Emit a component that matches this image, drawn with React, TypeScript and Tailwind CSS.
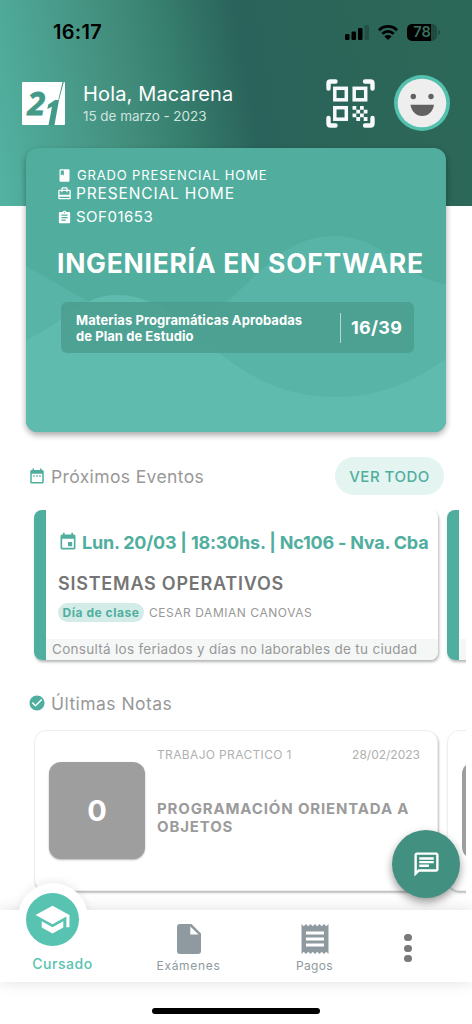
import {
  MdAssignment,
  MdCardTravel,
  MdCheckCircle,
  MdClass,
  MdDateRange,
  MdEvent,
  MdOutlineChat,
  MdReceipt,
  MdSchool,
} from "react-icons/md";

function Logo() {
  return (
    <svg width="43" height="43" viewBox="0 0 43 43" className="shrink-0">
      <rect width="43" height="43" rx="1" fill="#fff" />
      <text x="5.500" y="33" fontFamily="Open Sans, sans-serif" fontSize="32" fontWeight="700" fontStyle="italic" fill="#439a88" stroke="#439a88" strokeWidth="0.800">2</text>
      <path d="M40.500 0H41.800L37 18L32.500 43H26.500L30 24.800L25.300 27L26.300 22.500L33 18H36.300Z" fill="#439a88" />
    </svg>
  );
}

function StatusBar() {
  return (
    <div className="flex h-8 items-center justify-between pl-[53px] pr-[35px] text-black">
      <span className="text-[20px] font-semibold leading-none tracking-[0.3px]">16:17</span>
      <div className="flex items-center">
        <svg width="24" height="16" viewBox="0 0 24 16">
          <rect x="0" y="10" width="4.5" height="6" rx="1.2" />
          <rect x="6.5" y="7.5" width="4.5" height="8.5" rx="1.2" />
          <rect x="13" y="4" width="4.5" height="12" rx="1.2" />
          <rect x="19.5" y="1" width="4.5" height="15" rx="1.2" opacity="0.2" />
        </svg>
        <svg width="20" height="15" viewBox="0 0 20 15" className="ml-[9px]" fill="none" stroke="#000" strokeWidth="2.7">
          <path d="M1 5.2C6 .2 14 .2 19 5.2M4.3 8.7C7.6 5.6 12.4 5.6 15.7 8.7" />
          <path d="M10 15L6.4 11.4C8.5 9.6 11.5 9.6 13.6 11.4Z" fill="#000" stroke="none" />
        </svg>
        <div className="relative ml-[9px] flex h-[17px] w-[30px] items-center justify-center rounded-[5px] bg-[linear-gradient(90deg,#000_80%,#204b40_80%)]">
          <span className="text-[14.5px] font-semibold leading-none text-[#39715f]">78</span>
          <div className="absolute -right-[3px] top-[6px] h-[5px] w-[2px] rounded-r bg-[#204b40]" />
        </div>
      </div>
    </div>
  );
}

function QrIcon() {
  return (
    <svg width="49" height="49" viewBox="0 0 49 49" fill="none" stroke="#f7fafa" strokeWidth="3.500">
      <path d="M2.500 9.500V4.500Q2.500 2.500 4.500 2.500H9.500M39 2.500H44.500Q46.500 2.500 46.500 4.500V9.500M46.500 39V44.500Q46.500 46.500 44.500 46.500H39M9.500 46.500H4.500Q2.500 46.500 2.500 44.500V39" strokeWidth="4.400" strokeLinecap="round" />
      <rect x="8.800" y="9.300" width="11.500" height="11.500" />
      <rect x="28.200" y="9.300" width="11.500" height="11.500" />
      <rect x="8.800" y="28.700" width="11.500" height="11.500" />
      <path
        d="M26.500 27h3.800v3.800h-3.800zM34 27h3.800v3.800h-3.800zM30.300 30.700h3.800v3.800h-3.800zM37.700 30.700h3.800v3.800h-3.800zM26.500 34.400h3.800v3.800h-3.800zM34 34.400h3.800v3.800h-3.800zM30.300 38.100h3.800v3.800h-3.800zM37.700 38.100h3.800v3.800h-3.800z"
        fill="#f7fafa"
        stroke="none"
      />
    </svg>
  );
}

function Avatar() {
  return (
    <svg width="56" height="56" viewBox="0 0 56 56">
      <circle cx="28" cy="28" r="28" fill="#54c0ae" />
      <circle cx="28" cy="28" r="24.300" fill="#eee" />
      <circle cx="19.300" cy="21.500" r="2.700" fill="#616161" />
      <circle cx="37" cy="21.500" r="2.700" fill="#616161" />
      <path d="M16.500 29.800H40C39 36.500 34.500 41 28.200 41C22 41 17.500 36.500 16.500 29.800Z" fill="#616161" />
    </svg>
  );
}

function CareerCard() {
  return (
    <section className="relative mx-[26px] -mt-[58px] h-[284px] overflow-hidden rounded-xl bg-[#51ae9e] shadow-[0_3px_6px_rgba(0,0,0,0.35)]">
      <svg width="420" height="284" className="absolute inset-0">
        <path d="M0 118C42 140 92 178 145 178C210 178 235 88 307 88C360 88 375 130 420 136V284H0Z" fill="#57b4a6" />
        <path d="M0 192C40 174 54 147 91 147C165 147 195 249 309 249C355 249 392 232 420 210V284H0Z" fill="#5fbbae" />
      </svg>
      <div className="relative pl-[31px] pt-[18px] text-white">
        <div className="flex h-[18px] items-center">
          <MdClass className="size-[15px]" />
          <span className="ml-[5px] pt-px text-[13px] tracking-[0.850px]">GRADO PRESENCIAL HOME</span>
        </div>
        <div className="flex h-[18px] items-center">
          <MdCardTravel className="size-[15px]" />
          <span className="ml-[4px] pt-px text-[15.500px] tracking-[0.850px]">PRESENCIAL HOME</span>
        </div>
        <div className="mt-[6px] flex h-[18px] items-center">
          <MdAssignment className="size-[15px]" />
          <span className="ml-[4px] text-[15px] tracking-[0.500px]">SOF01653</span>
        </div>
        <h1 className="mt-[19px] whitespace-nowrap text-[26.500px] font-bold leading-[36px] tracking-[0.730px]">INGENIERÍA EN SOFTWARE</h1>
        <div className="ml-[4px] mt-[21px] flex h-[51px] w-[353px] items-center rounded-md bg-[#4a9c8d]/80 pl-[15px]">
          <p className="w-[264px] pt-[2px] text-[13px] font-bold leading-[15.500px] tracking-[0.060px]">
            Materias Programáticas Aprobadas
            <br />
            de Plan de Estudio
          </p>
          <div className="h-[30px] w-px bg-white/60" />
          <span className="ml-[10px] text-[18px] font-bold tracking-[0.300px]">16/39</span>
        </div>
      </div>
    </section>
  );
}

function Events() {
  return (
    <section>
      <div className="flex h-[38px] items-center pl-[28px] pr-[28px] text-[#989898]">
        <MdDateRange className="size-[18px] text-[#50ae9e]" />
        <h2 className="ml-[5px] flex-1 pt-[3px] text-[17.500px] tracking-[0.370px]">Próximos Eventos</h2>
        <button className="h-[38px] w-[109px] rounded-full bg-[#e4f5f1] pt-[2px] text-[15px] font-medium tracking-[0.500px] text-[#50ae9e]">VER TODO</button>
      </div>
      <div className="mt-[15px] flex w-[466px] gap-[9px] overflow-hidden pb-2 pl-[34px]">
        <article className="flex h-[150px] w-[404px] shrink-0 overflow-hidden rounded-lg bg-white shadow-[1px_2px_3px_rgba(0,0,0,0.3)]">
          <div className="w-[12px] shrink-0 bg-[#50ae9e]" />
          <div className="flex flex-1 flex-col whitespace-nowrap">
            <div className="mt-[21px] flex h-[22px] items-center pl-[12px] text-[#50ae9e]">
              <MdEvent className="size-[20px]" />
              <span className="ml-[4px] pt-px text-[18px] font-bold tracking-[-0.220px]">Lun. 20/03 | 18:30hs. | Nc106 - Nva. Cba</span>
            </div>
            <h3 className="mt-[19px] pl-[12px] text-[18px] font-semibold leading-[23px] tracking-[0.770px] text-[#757575]">SISTEMAS OPERATIVOS</h3>
            <div className="mt-[8px] flex items-center pl-[12px]">
              <span className="flex h-[19px] w-[86px] items-center justify-center rounded-full bg-[#d3ece8] pt-px text-[12px] font-bold tracking-[0.550px] text-[#50ae9e]">Día de clase</span>
              <span className="ml-[5px] pt-px text-[12px] tracking-[0.540px] text-[#989898]">CESAR DAMIAN CANOVAS</span>
            </div>
            <p className="mt-auto h-[21px] bg-[#f4f7f6] pl-[6px] text-[13.500px] leading-[21px] tracking-[0.290px] text-[#989898]">
              Consultá los feriados y días no laborables de tu ciudad
            </p>
          </div>
        </article>
        <article className="flex h-[150px] w-[404px] shrink-0 items-end overflow-hidden rounded-lg bg-white shadow-[1px_2px_3px_rgba(0,0,0,0.3)]">
          <div className="h-full w-[12px] bg-[#50ae9e]" />
          <div className="h-[21px] flex-1 bg-[#f4f7f6]" />
        </article>
      </div>
    </section>
  );
}

function Grades() {
  return (
    <section className="mt-[23px]">
      <div className="flex h-[24px] items-center pl-[28px] text-[#989898]">
        <MdCheckCircle className="size-[18px] text-[#50ae9e]" />
        <h2 className="ml-[5px] pt-[2px] text-[17.500px] tracking-[0.450px]">Últimas Notas</h2>
      </div>
      <div className="mt-[15px] flex w-[466px] gap-[9px] overflow-hidden pb-2 pl-[34px]">
        <article className="flex h-[161px] w-[404px] shrink-0 rounded-xl border border-[#eee] bg-white pl-[14px] shadow-[1px_2px_2px_rgba(0,0,0,0.25)]">
          <div className="mt-[31px] flex h-[97px] w-[96px] items-center justify-center rounded-xl bg-[#9e9e9e] text-[29px] font-bold text-white shadow-[0_1px_2px_rgba(0,0,0,0.3)]">0</div>
          <div className="ml-[12px] mr-[17px] flex-1">
            <div className="mt-[15px] flex justify-between text-[12px] leading-[18px] text-[#b0b0b0]">
              <span className="tracking-[0.350px]">TRABAJO PRACTICO 1</span>
              <span>28/02/2023</span>
            </div>
            <h3 className="mt-[36px] whitespace-nowrap text-[15px] font-bold leading-[18px] tracking-[0.850px] text-[#9b9b9b]">
              PROGRAMACIÓN ORIENTADA A
              <br />
              OBJETOS
            </h3>
          </div>
        </article>
        <article className="h-[161px] w-[404px] shrink-0 rounded-xl border border-[#eee] bg-white pl-[14px] shadow-[1px_2px_2px_rgba(0,0,0,0.25)]">
          <div className="mt-[31px] h-[97px] w-[96px] rounded-xl bg-[#9e9e9e]" />
        </article>
      </div>
    </section>
  );
}

function BottomNav() {
  return (
    <nav className="relative mt-[11px] flex h-[72px] bg-white text-[#8e9aa0] shadow-[0_0_14px_rgba(0,0,0,0.13)]">
      <div className="absolute left-[18px] top-[-27px] size-[70px] rounded-full bg-white shadow-[0_-2px_8px_rgba(0,0,0,0.08)]" />
      <div className="absolute left-0 top-0 h-full w-[110px] bg-white" />
      <div className="relative w-[125px]">
        <div className="ml-[26px] mt-[-17px] flex size-[53px] items-center justify-center rounded-full bg-[#58c3b1]">
          <MdSchool className="size-[37px] text-white" />
        </div>
        <p className="mt-[8px] text-center text-[14px] font-medium leading-[20px] tracking-[0.550px] text-[#58c3b1]">Cursado</p>
      </div>
      <div className="flex w-[126px] flex-col items-center pl-px pt-[11px]">
        <svg width="36" height="36" viewBox="0 0 36 36" fill="currentColor">
          <path d="M9 3H20.500L30 12.500V30Q30 33 27 33H9Q6 33 6 30V6Q6 3 9 3ZM19.300 5.500V13.500H27.500Z" fillRule="evenodd" />
        </svg>
        <span className="text-[12px] leading-[18px] tracking-[0.700px]">Exámenes</span>
      </div>
      <div className="flex w-[126px] flex-col items-center pl-px pt-[11px]">
        <MdReceipt className="size-[36px]" />
        <span className="text-[12px] leading-[18px] tracking-[0.350px]">Pagos</span>
      </div>
      <div className="flex w-[62px] flex-col items-center gap-[3.300px] pt-[24px]">
        <div className="size-[7.300px] rounded-full bg-[#78797a]" />
        <div className="size-[7.300px] rounded-full bg-[#78797a]" />
        <div className="size-[7.300px] rounded-full bg-[#78797a]" />
      </div>
    </nav>
  );
}

export default function App() {
  return (
    <div className="relative h-[1024px] w-[472px] overflow-hidden bg-white font-['Inter',sans-serif]">
      <header className="h-[206px] bg-[linear-gradient(80deg,#53b3a3_0%,#44907f_26%,#37806f_38%,#2a635b_53%,#2b6559_70%,#2c6857_100%)] pt-[16px]">
        <StatusBar />
        <div className="mt-[27px] flex h-[56px] items-center pl-[22px] pr-[22px] text-white">
          <Logo />
          <div className="ml-[18px] flex-1">
            <p className="text-[20px] leading-[25px] tracking-[0.150px]">Hola, Macarena</p>
            <p className="text-[13.500px] leading-[18px] tracking-[-0.050px] text-[#cfe5df]">15 de marzo - 2023</p>
          </div>
          <QrIcon />
          <div className="ml-[19px]">
            <Avatar />
          </div>
        </div>
      </header>
      <div className="relative">
        <CareerCard />
        <div className="mt-[25px]">
          <Events />
        </div>
        <Grades />
        <BottomNav />
        <div className="mx-auto mt-[26px] h-[6px] w-[168px] rounded-full bg-black" />
      </div>
      <button className="absolute left-[392px] top-[830px] flex size-[68px] items-center justify-center rounded-full bg-[#429080] text-white shadow-[0_4px_9px_rgba(0,0,0,0.4)]">
        <MdOutlineChat className="size-[29px]" />
      </button>
    </div>
  );
}
